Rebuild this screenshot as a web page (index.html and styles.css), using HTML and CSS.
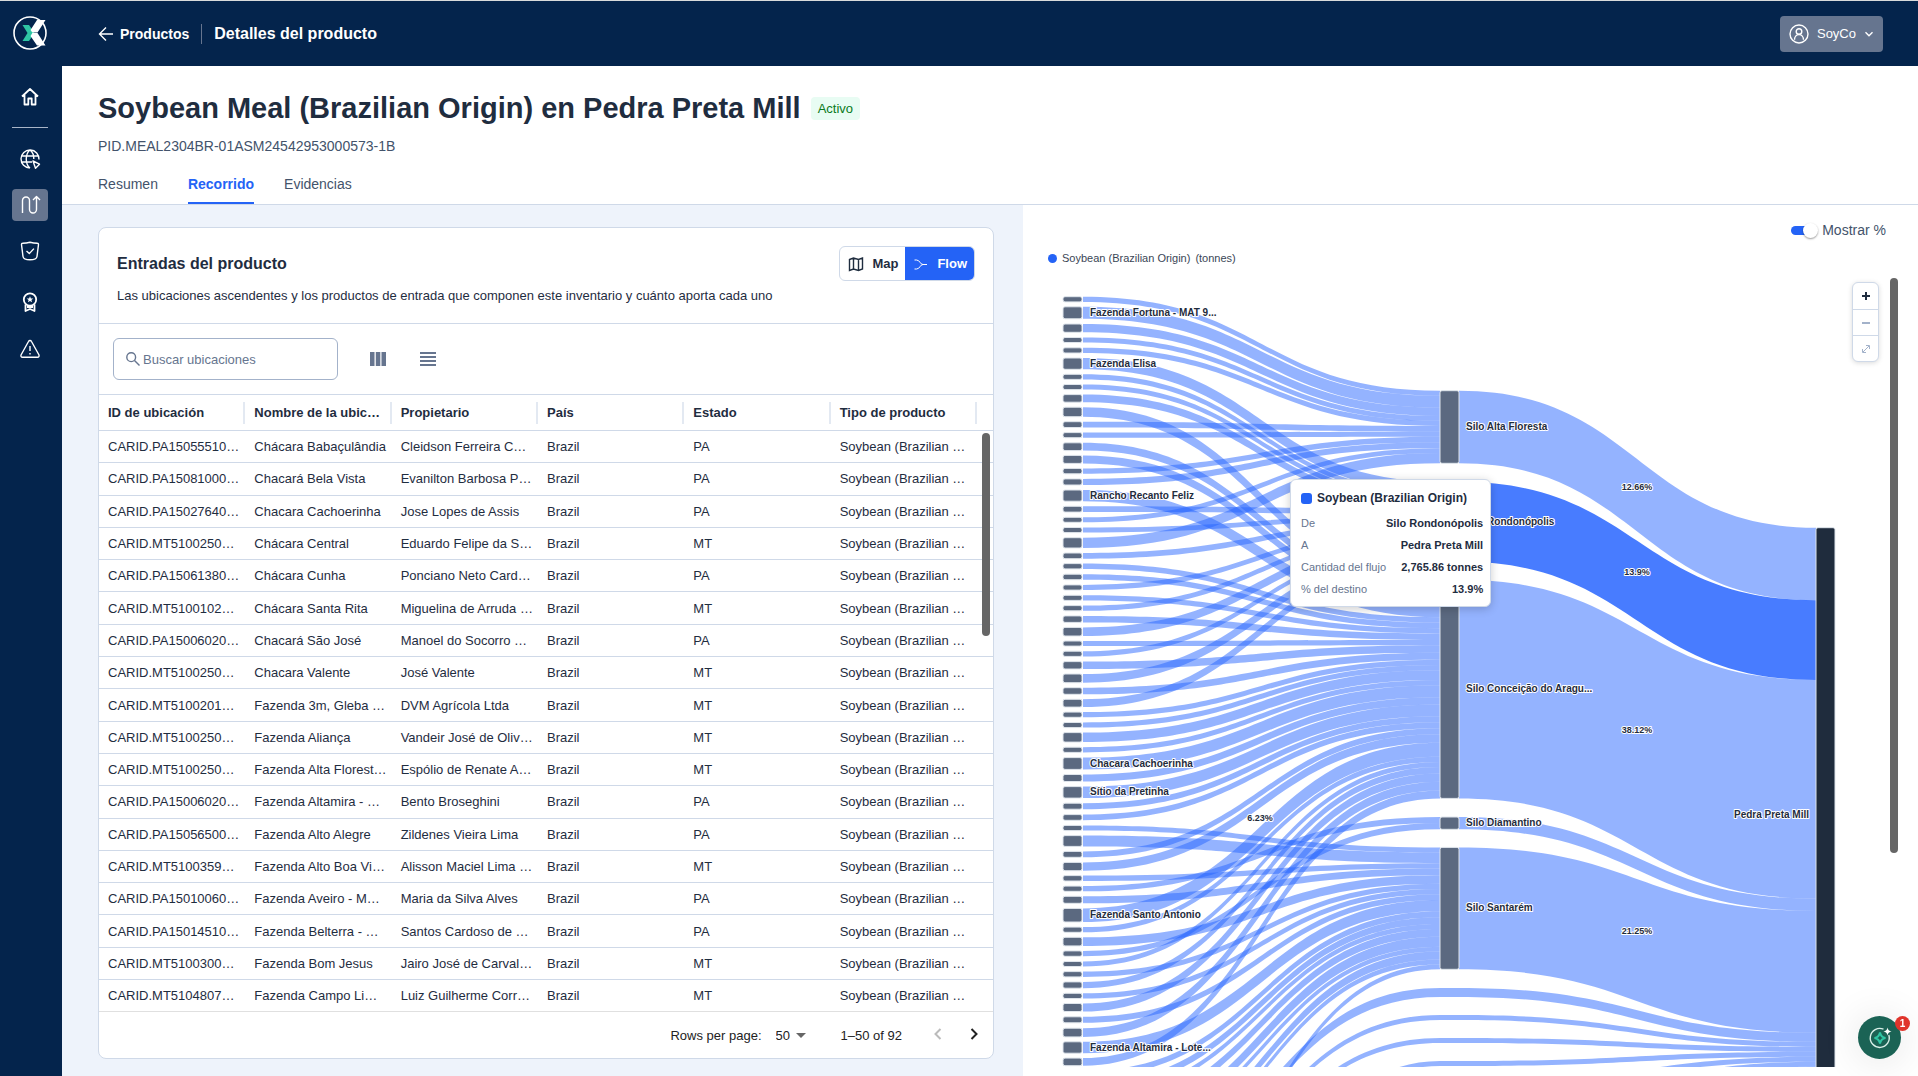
FILE: index.html
```html
<!DOCTYPE html>
<html lang="es">
<head>
  <meta charset="UTF-8">
  <meta name="viewport" content="width=device-width, initial-scale=1">
  <title>Detalles del producto</title>
  <link rel="stylesheet" href="styles.css">
</head>
<body>
  <nav class="sidebar">
    <a href="#" class="logo" aria-label="Inicio">
      <svg width="36" height="36" viewBox="0 0 36 36">
        <circle cx="18" cy="18" r="16" fill="none" stroke="#fff" stroke-width="1.6"/>
        <path d="M10.500 10h6.500l5.500 8-5.500 8h-6.500l5-8z" fill="#2fc6a4"/>
        <path d="M25 5h8.500l-8 12.500h-5.200L18.500 15z M18.500 21l1.800-3h5.200l8 12.500H25z" fill="#fff"/>
      </svg>
    </a>
    <a href="#" class="nav-item home" aria-label="Panel">
      <svg width="20" height="20" viewBox="0 0 20 20"><path d="M2 9.500 10 2l8 7.500M4.500 8v9.500h3.800v-6h3.400v6h3.800V8" /></svg>
    </a>
    <hr>
    <a href="#" class="nav-item globe" aria-label="Orígenes">
      <svg width="22" height="22" viewBox="0 0 22 22"><path d="M20 11.500A9 9 0 1 0 11 20M2.800 8h16.400M2.800 14H13M11 2C6 6 6 16 11 20M11 2c3 2.500 4 6 3.800 9"/><path d="M14 13l6.500 3.200-4 4z"/></svg>
    </a>
    <a href="#" class="nav-item active" aria-label="Productos">
      <svg width="22" height="22" viewBox="0 0 22 22"><path d="M3.500 19V6.500a3.500 3.500 0 0 1 7 0v9a3.500 3.500 0 0 0 7 0V3M14 6l3.500-3.500L21 6"/></svg>
    </a>
    <a href="#" class="nav-item shield" aria-label="Cumplimiento">
      <svg width="20" height="20" viewBox="0 0 20 20"><path d="M10 1.200Q13.500 2 17.500 2.200 18.500 2.200 18.500 3.500L17 15.500Q16.500 18.800 10 18.800T3 15.500L1.500 3.500Q1.500 2.200 2.500 2.200 6.500 2 10 1.200zM6.500 10l2.800 2.600 4.600-5"/></svg>
    </a>
    <a href="#" class="nav-item medal" aria-label="Certificados">
      <svg width="20" height="20" viewBox="0 0 20 20"><circle cx="10" cy="7.500" r="6.200"/><path d="M5.500 12.500v6.500l4.500-2 4.500 2v-6.500M7 15h6"/><path class="solid" d="M10 4.200l.9 2.200 2.400.1-1.900 1.500.7 2.300-2.100-1.300-2.100 1.300.7-2.300-1.900-1.500 2.400-.1z"/></svg>
    </a>
    <a href="#" class="nav-item alert" aria-label="Alertas">
      <svg width="22" height="22" viewBox="0 0 22 22"><path d="M11 2.500Q12 2.500 12.500 3.500L20 17Q20.500 19 18.500 19.200H3.500Q1.500 19 2 17L9.500 3.500Q10 2.500 11 2.500zM11 8v5M11 15v1.500"/></svg>
    </a>
  </nav>

  <div class="page">
    <header class="topbar">
      <a href="#" class="back">
        <svg width="16" height="16" viewBox="0 0 16 16"><path d="M15 8H1.500M8 1.500 1.500 8 8 14.500"/></svg>
        Productos
      </a>
      <span class="crumb">Detalles del producto</span>
      <button class="account">
        <svg width="20" height="20" viewBox="0 0 20 20"><circle cx="10" cy="10" r="9"/><circle cx="10" cy="7.500" r="2.800"/><path d="M5.500 15.800c0-7 9-7 9 0"/></svg>
        SoyCo
        <svg width="10" height="10" viewBox="0 0 10 10"><path d="M1.500 3.200 5 6.700l3.500-3.500"/></svg>
      </button>
    </header>

    <section class="product">
      <div class="product-title">
        <h1>Soybean Meal (Brazilian Origin) en Pedra Preta Mill</h1>
        <span class="badge">Activo</span>
      </div>
      <p class="pid">PID.MEAL2304BR-01ASM24542953000573-1B</p>
      <div class="tabs">
        <a href="#">Resumen</a>
        <a href="#" class="current">Recorrido</a>
        <a href="#">Evidencias</a>
      </div>
    </section>

    <main class="content">
      <section class="inputs">
        <div class="card">
          <div class="card-head">
            <div class="card-title">
              <h2>Entradas del producto</h2>
              <div class="view-switch">
                <button>
                  <svg width="16" height="16" viewBox="0 0 16 16"><path d="M1.500 3.500l4-1.500 5 1.500 4-1.500v11l-4 1.500-5-1.500-4 1.500zM5.500 2v11M10.500 3.500v11"/></svg>
                  Map
                </button>
                <button class="selected">
                  <svg width="16" height="16" viewBox="0 0 16 16"><path class="thin" d="M1.500 4h2C7 4 7 8.500 10 8.500h4M1.500 13h2C7 13 7 8.500 10 8.500"/></svg>
                  Flow
                </button>
              </div>
            </div>
            <p>Las ubicaciones ascendentes y los productos de entrada que componen este inventario y cuánto aporta cada uno</p>
          </div>

          <div class="toolbar">
            <label class="search">
              <svg width="16" height="16" viewBox="0 0 16 16"><circle cx="6.200" cy="6.200" r="4.400"/><path d="M9.500 9.500l5 5"/></svg>
              <input type="text" placeholder="Buscar ubicaciones" aria-label="Buscar ubicaciones">
            </label>
            <button class="tool" aria-label="Columnas">
              <svg width="16" height="14" viewBox="0 0 16 14"><path d="M0 0h4.500v14H0zM5.800 0h4.500v14H5.800zM11.500 0H16v14h-4.500z"/></svg>
            </button>
            <button class="tool" aria-label="Densidad">
              <svg width="16" height="14" viewBox="0 0 16 14"><path d="M0 0h16v2H0zM0 4h16v2H0zM0 8h16v2H0zM0 12h16v2H0z"/></svg>
            </button>
          </div>

          <div class="table-wrap">
            <table>
              <colgroup><col><col><col><col><col><col><col class="gutter"></colgroup>
              <thead>
                <tr>
                  <th>ID de ubicación</th>
                  <th>Nombre de la ubic…</th>
                  <th>Propietario</th>
                  <th>País</th>
                  <th>Estado</th>
                  <th>Tipo de producto</th>
                  <td></td>
                </tr>
              </thead>
              <tbody id="rows"></tbody>
            </table>
            <div class="scroll-thumb"></div>
          </div>

          <div class="pager">
            <label for="page-size">Rows per page:</label>
            <span class="page-size">
              <select id="page-size"><option>50</option><option>100</option></select>
              <svg width="10" height="5" viewBox="0 0 10 5"><path d="M0 0h10L5 5z" fill="#666"/></svg>
            </span>
            <span class="range">1–50 of 92</span>
            <button disabled aria-label="Anterior"><svg width="8" height="12" viewBox="0 0 8 12"><path d="M6.500 1 1.500 6l5 5"/></svg></button>
            <button aria-label="Siguiente"><svg width="8" height="12" viewBox="0 0 8 12"><path d="M1.500 1l5 5-5 5"/></svg></button>
          </div>
        </div>
      </section>

      <section class="flow">
        <div class="flow-options">
          <label class="switch"><input type="checkbox" checked><span class="track"></span>Mostrar %</label>
        </div>
        <div class="legend"><i></i><span>Soybean (Brazilian Origin)</span><span>(tonnes)</span></div>
        <svg id="sankey" viewBox="1023 280 895 787"></svg>

        <div class="zoom">
          <button aria-label="Acercar"><svg width="10" height="10" viewBox="0 0 10 10"><path d="M5 1v8M1 5h8"/></svg></button>
          <button disabled aria-label="Alejar"><svg width="10" height="10" viewBox="0 0 10 10"><path d="M1 5h8"/></svg></button>
          <button disabled aria-label="Restablecer"><svg width="10" height="10" viewBox="0 0 10 10"><path class="thin" d="M2 8l6-6M5 1.500h3.500V5M5 8.500H1.500V5"/></svg></button>
        </div>

        <div class="tooltip">
          <h3><i></i>Soybean (Brazilian Origin)</h3>
          <dl>
            <dt>De</dt><dd>Silo Rondonópolis</dd>
            <dt>A</dt><dd>Pedra Preta Mill</dd>
            <dt>Cantidad del flujo</dt><dd>2,765.86 tonnes</dd>
            <dt>% del destino</dt><dd>13.9%</dd>
          </dl>
        </div>
        <div class="flow-scroll"></div>
      </section>
    </main>
  </div>

  <button class="assistant" aria-label="Asistente">
    <svg width="24" height="24" viewBox="0 0 24 24">
      <path d="M15.500 3.200A9.500 9.500 0 1 0 20.800 9" fill="none" stroke="#d9efe8" stroke-width="1.400"/>
      <path d="M12 6.500Q12.800 11.200 17.500 12 12.800 12.800 12 17.500 11.200 12.800 6.500 12 11.200 11.200 12 6.500z" fill="none" stroke="#2fc6a4" stroke-width="2"/>
      <path d="M19.500 1.500Q20 5 23.500 5.500 20 6 19.500 9.500 19 6 15.500 5.500 19 5 19.500 1.500z" fill="#fff"/>
    </svg>
    <span class="count">1</span>
  </button>

  <script src="script.js"></script>
</body>
</html>
```

FILE: styles.css
```css
* { box-sizing: border-box; }
body {
  margin: 0;
  height: 100vh;
  display: flex;
  overflow: hidden;
  border-top: 1px solid #d9dbdb;
  font-family: 'Liberation Sans', Arial, sans-serif;
  font-size: 13px;
  color: #1f2d3f;
  background: #fff;
}
h1, h2, h3, p, dl, dd { margin: 0; }
a { color: inherit; text-decoration: none; }
button, input, select { font: inherit; color: inherit; }
button {
  border: none;
  background: none;
  padding: 0;
  cursor: pointer;
}
svg { flex-shrink: 0; }

/* sidebar */
.sidebar {
  width: 62px;
  padding-right: 2px;
  background: #04244c;
  display: flex;
  flex-direction: column;
  align-items: center;
}
.logo {
  height: 36px;
  margin: 14px 0 30px;
}
.nav-item {
  width: 36px;
  height: 32px;
  display: flex;
  align-items: center;
  justify-content: center;
  border-radius: 4px;
}
.nav-item svg, .topbar svg, .view-switch svg, .search svg, .pager button svg, .zoom svg {
  fill: none;
  stroke: currentColor;
  stroke-width: 1.4;
}
.nav-item svg {
  stroke: #fff;
  stroke-linejoin: round;
}
.nav-item.home svg, .nav-item.medal svg { stroke-width: 1.8; }
.nav-item .solid { fill: #fff; stroke: none; }
.nav-item.active {
  background: #66758f;
  margin: 14px 0;
}
.nav-item.medal { margin: 19px 0 15px; }
.sidebar hr {
  width: 36px;
  border: none;
  border-top: 1px solid #a9b5c8;
  margin: 14px 0 15px;
}

/* top bar */
.page {
  flex: 1;
  min-width: 0;
  display: flex;
  flex-direction: column;
}
.topbar {
  height: 65px;
  padding: 0 35px 0 36px;
  background: #04244c;
  color: #fff;
  font-weight: bold;
  display: flex;
  align-items: center;
}
.back {
  display: flex;
  align-items: center;
  gap: 6px;
  font-size: 14px;
}
.crumb {
  margin-left: 12px;
  padding-left: 12px;
  border-left: 1px solid #66758f;
  font-size: 16px;
  line-height: 20px;
}
.account {
  margin-left: auto;
  height: 36px;
  padding: 0 9px;
  border-radius: 4px;
  background: #66758f;
  display: flex;
  align-items: center;
  gap: 8px;
  font-weight: normal;
}

/* product header */
.product {
  padding: 22px 36px 0;
  border-bottom: 1px solid #cfd9e8;
}
.product-title {
  display: flex;
  align-items: center;
  gap: 10px;
}
h1 {
  font-size: 29px;
  line-height: 40px;
}
.badge {
  padding: 4px 7px;
  border-radius: 4px;
  background: #e8fcf3;
  color: #0a7a1c;
  line-height: 15px;
}
.pid {
  margin-top: 8px;
  font-size: 14px;
  line-height: 20px;
  color: #43536b;
}
.tabs {
  display: flex;
  gap: 30px;
  margin-top: 18px;
  font-size: 14px;
  color: #43536b;
}
.tabs a {
  line-height: 20px;
  padding-bottom: 8px;
  border-bottom: 2px solid transparent;
}
.tabs .current {
  color: #2463f6;
  font-weight: bold;
  border-color: #2463f6;
}

/* inputs card */
.content {
  flex: 1;
  min-height: 0;
  display: grid;
  grid-template-columns: 961fr 895fr;
}
.inputs {
  min-height: 0;
  padding: 22px 29px 17px 36px;
  background: #eef3fb;
}
.card {
  height: 100%;
  display: flex;
  flex-direction: column;
  border: 1px solid #cfd9e8;
  border-radius: 8px;
  background: #fff;
}
.card-head {
  padding: 18px 18px 19px;
  border-bottom: 1px solid #cfd9e8;
}
.card-title {
  display: flex;
  align-items: center;
  justify-content: space-between;
}
h2 { font-size: 16px; }
.card-head p {
  margin-top: 7px;
  line-height: 16px;
}
.view-switch {
  display: flex;
  border: 1px solid #cfd9e8;
  border-radius: 6px;
  overflow: hidden;
  font-weight: bold;
}
.view-switch button {
  height: 33px;
  padding: 0 7px 0 8px;
  display: flex;
  align-items: center;
  gap: 8px;
}
.view-switch .selected {
  background: #2463f6;
  color: #fff;
}
.view-switch .thin, .zoom .thin { stroke-width: 1; }
.toolbar {
  padding: 14px;
  display: flex;
  align-items: center;
  gap: 30px;
  color: #66758f;
}
.search {
  width: 225px;
  height: 42px;
  padding: 0 11px;
  border: 1px solid #a3b2ca;
  border-radius: 6px;
  display: flex;
  align-items: center;
}
.search input {
  width: 100%;
  border: none;
  outline: none;
}
.search input::placeholder { color: #66758f; }
.tool {
  width: 20px;
  height: 14px;
  fill: currentColor;
}

.table-wrap {
  flex: 1;
  min-height: 0;
  position: relative;
}
table {
  width: 100%;
  height: 100%;
  table-layout: fixed;
  border-collapse: collapse;
}
.gutter { width: 16px; }
th, td {
  padding: 0 9px;
  text-align: left;
  white-space: nowrap;
  border-top: 1px solid #cfd9e8;
}
th {
  height: 36px;
  background: linear-gradient(#e3e9f2, #e3e9f2) right center / 2px 22px no-repeat;
}
.scroll-thumb {
  position: absolute;
  top: 39px;
  right: 3px;
  width: 8px;
  height: 203px;
  border-radius: 4px;
  background: #666;
}
.pager {
  height: 47px;
  padding: 0 11px;
  border-top: 1px solid #e0e0e0;
  display: flex;
  align-items: center;
  justify-content: flex-end;
  color: #222;
}
.page-size {
  display: flex;
  align-items: center;
  margin: 0 35px 0 14px;
}
.page-size select {
  appearance: none;
  border: none;
  background: none;
  width: 20px;
  padding: 0;
}
.range { margin-right: 28px; }
.pager button {
  width: 16px;
  height: 16px;
  margin-left: 20px;
}
.pager .range + button { margin-left: 0; }
.pager button svg { stroke-width: 2; }
.pager button:disabled { color: #bbb; }

/* flow chart */
.flow {
  position: relative;
  min-width: 0;
  overflow: hidden;
}
.flow-options {
  display: flex;
  justify-content: flex-end;
  padding: 15px 32px 0 0;
  font-size: 14px;
  line-height: 20px;
  color: #43536b;
}
.switch {
  display: flex;
  align-items: center;
  gap: 11px;
}
.switch input {
  position: absolute;
  opacity: 0;
}
.track {
  position: relative;
  width: 20px;
  height: 9px;
  border-radius: 5px;
  background: #2463f6;
}
.track::after {
  content: '';
  position: absolute;
  top: -3px;
  left: 12px;
  width: 15px;
  height: 15px;
  border-radius: 50%;
  background: #fff;
  box-shadow: 0 1px 2px rgba(0, 0, 0, 0.4);
}
.legend {
  display: flex;
  align-items: center;
  gap: 5px;
  padding: 10px 0 0 25px;
  font-size: 11px;
  line-height: 16px;
  color: #3a4656;
}
.legend i {
  width: 9px;
  height: 9px;
  border-radius: 50%;
  background: #2463f6;
}
#sankey {
  display: block;
  width: 100%;
  margin-top: 14px;
  overflow: hidden;
}
.link { fill: #2563ff; fill-opacity: 0.49; }
.link.hover { fill-opacity: 0.84; }
.node { fill: #5b6980; stroke: #dfe5ec; }
.node.end { fill: #1f2c3d; }
#sankey text {
  font-size: 10px;
  font-weight: bold;
  fill: #1f2c3d;
  stroke: #fff;
  stroke-width: 2px;
  paint-order: stroke;
  stroke-linejoin: round;
}
#sankey text.percent { font-size: 9px; text-anchor: middle; }
#sankey text.last { text-anchor: end; }

.zoom {
  position: absolute;
  top: 77px;
  right: 39px;
  border: 1px solid #cfd9e8;
  border-radius: 6px;
  background: #fff;
  box-shadow: 0 1px 5px rgba(0, 0, 0, 0.15);
}
.zoom button {
  display: flex;
  align-items: center;
  justify-content: center;
  width: 25px;
  height: 26px;
}
.zoom button + button { border-top: 1px solid #cfd9e8; }
.zoom button:disabled { color: #a3b2ca; }
.zoom svg { stroke-width: 2; }
.flow-scroll {
  position: absolute;
  top: 73px;
  right: 20px;
  width: 8px;
  height: 575px;
  border-radius: 4px;
  background: #666;
}
.tooltip {
  position: absolute;
  left: 267px;
  top: 274px;
  width: 201px;
  padding: 10px;
  border: 1px solid #cfd9e8;
  border-radius: 6px;
  background: #fff;
  box-shadow: 0 2px 10px rgba(0, 0, 0, 0.2);
  font-size: 11px;
  white-space: nowrap;
}
.tooltip h3 {
  display: flex;
  align-items: center;
  gap: 5px;
  font-size: 12px;
  line-height: 16px;
}
.tooltip i {
  width: 11px;
  height: 11px;
  border-radius: 3px;
  background: #2463f6;
}
.tooltip dl {
  display: grid;
  grid-template-columns: auto auto;
  row-gap: 8px;
  margin-top: 10px;
  line-height: 14px;
}
.tooltip dt { color: #66758f; }
.tooltip dd {
  text-align: right;
  font-weight: bold;
}

/* assistant */
.assistant {
  position: fixed;
  right: 17px;
  bottom: 17px;
  width: 43px;
  height: 43px;
  border-radius: 50%;
  background: #1b6355;
  box-shadow: 0 2px 40px rgba(0, 0, 0, 0.12);
  display: flex;
  align-items: center;
  justify-content: center;
}
.count {
  position: absolute;
  top: 0;
  right: -9px;
  width: 15px;
  height: 15px;
  border-radius: 50%;
  background: #e0342b;
  color: #fff;
  font-size: 10px;
  font-weight: bold;
  line-height: 15px;
}
```

FILE: script.js
```js
const rows = [
  ['CARID.PA15055510…', 'Chácara Babaçulândia', 'Cleidson Ferreira C…', 'PA'],
  ['CARID.PA15081000…', 'Chacará Bela Vista', 'Evanilton Barbosa P…', 'PA'],
  ['CARID.PA15027640…', 'Chacara Cachoerinha', 'Jose Lopes de Assis', 'PA'],
  ['CARID.MT5100250…', 'Chácara Central', 'Eduardo Felipe da S…', 'MT'],
  ['CARID.PA15061380…', 'Chácara Cunha', 'Ponciano Neto Card…', 'PA'],
  ['CARID.MT5100102…', 'Chácara Santa Rita', 'Miguelina de Arruda …', 'MT'],
  ['CARID.PA15006020…', 'Chacará São José', 'Manoel do Socorro …', 'PA'],
  ['CARID.MT5100250…', 'Chacara Valente', 'José Valente', 'MT'],
  ['CARID.MT5100201…', 'Fazenda 3m, Gleba …', 'DVM Agrícola Ltda', 'MT'],
  ['CARID.MT5100250…', 'Fazenda Aliança', 'Vandeir José de Oliv…', 'MT'],
  ['CARID.MT5100250…', 'Fazenda Alta Florest…', 'Espólio de Renate A…', 'MT'],
  ['CARID.PA15006020…', 'Fazenda Altamira - …', 'Bento Broseghini', 'PA'],
  ['CARID.PA15056500…', 'Fazenda Alto Alegre', 'Zildenes Vieira Lima', 'PA'],
  ['CARID.MT5100359…', 'Fazenda Alto Boa Vi…', 'Alisson Maciel Lima …', 'MT'],
  ['CARID.PA15010060…', 'Fazenda Aveiro - M…', 'Maria da Silva Alves', 'PA'],
  ['CARID.PA15014510…', 'Fazenda Belterra - …', 'Santos Cardoso de …', 'PA'],
  ['CARID.MT5100300…', 'Fazenda Bom Jesus', 'Jairo José de Carval…', 'MT'],
  ['CARID.MT5104807…', 'Fazenda Campo Li…', 'Luiz Guilherme Corr…', 'MT']
];

document.getElementById('rows').innerHTML = rows.map(function (r) {
  return '<tr><td>' + [r[0], r[1], r[2], 'Brazil', r[3], 'Soybean (Brazilian …'].join('</td><td>') + '</td><td></td></tr>';
}).join('');

// silos: top, height
const silos = {
  A: { y: 390.7, h: 72.6, name: 'Silo Alta Floresta', pct: '12.66%' },
  R: { y: 481.8, h: 79.7, name: 'Silo Rondonópolis', pct: '13.9%', hover: true },
  C: { y: 579.8, h: 218.6, name: 'Silo Conceição do Aragu...', pct: '38.12%' },
  D: { y: 817, h: 12.3, name: 'Silo Diamantino' },
  S: { y: 847.4, h: 121.9, name: 'Silo Santarém', pct: '21.25%' }
};

// farms: top, height, target silo, label
const farms = [
  [296.7, 5.2, 'A'], [306.8, 12, 'A', 'Fazenda Fortuna - MAT 9...'], [324, 8.3, 'A'], [337.5, 5, 'A'],
  [347.8, 5.2, 'A'], [358, 11.3, 'R', 'Fazenda Elisa'], [374.3, 5.1, 'R'], [384.5, 5.1, 'R'],
  [394.6, 7.6, 'R'], [407.2, 9.5, 'C'], [421.7, 5.8, 'A'], [432.6, 5.1, 'A'], [442.8, 7.8, 'C'],
  [455.4, 8, 'C'], [468.4, 5.4, 'A'], [478.9, 6.1, 'A'], [490, 11.2, 'C', 'Rancho Recanto Feliz'],
  [506.3, 5.8, 'R'], [517.3, 5, 'A'], [527.5, 5.1, 'R'], [537.7, 10.3, 'A'], [553, 5.7, 'R'],
  [563.6, 5.3, 'C'], [574.2, 5.5, 'C'], [584.9, 5.2, 'R'], [595.3, 5.1, 'C'], [605.6, 5.2, 'R'],
  [615.9, 6.5, 'C'], [627.4, 8.6, 'R'], [641, 5.1, 'C'], [651.2, 5.2, 'R'], [661.6, 7.4, 'C'],
  [674, 8.7, 'R'], [687.7, 6.6, 'C'], [699.3, 7.8, 'R'], [712.1, 5.2, 'C'], [722.5, 5.1, 'C'],
  [732.6, 9.5, 'C'], [747.2, 5.2, 'C'], [757.6, 11.8, 'C', 'Chacara Cachoerinha'], [774.5, 7, 'C'],
  [786.6, 11.5, 'C', 'Sítio da Pretinha'], [803.2, 6, 'C'], [814.6, 5.7, 'C'], [825.4, 5.2, 'S'],
  [835.6, 10.8, 'S'], [851.4, 5.9, 'C'], [862.4, 8.3, 'C'], [875.6, 5.4, 'S'], [886.1, 5.2, 'D'],
  [896.3, 7, 'S'], [908.4, 13.6, 'C', 'Fazenda Santo Antonio'], [927.1, 5.2, 'C'], [937.3, 8.6, 'S'],
  [950.9, 5.4, 'D'], [961.5, 5, 'C'], [971.6, 5.3, 'S'], [981.9, 6.3, 'C'], [993.3, 5.2, 'S'],
  [1003.5, 8, 'C'], [1016.8, 6, 'S'], [1028.2, 8.7, 'C'], [1041.8, 11.4, 'S', 'Fazenda Altamira - Lote...'],
  [1058.1, 7.6, 'C'], [1071, 6, 'S'], [1083, 7, 'S'], [1095, 5, 'S'], [1110, 8, 'S'],
  [1128, 10, 'S'], [1145, 5, 'S'], [1165, 8, 'S'], [1180, 5, 'S'], [1258, 5, 'S']
];

// flows that go straight to the mill: source top, height, top at the silo column
const direct = [
  [1195, 9, 988], [1220, 5, 1015], [1240, 5, 1038], [1375, 5, 1061], [1400, 5, 1084],
  [1420, 5, 1108], [1440, 6, 1131], [1460, 10, 1154], [1480, 9, 1182], [1500, 8, 1210]
];

const FARM_X = 1063, SILO_X = 1440, MILL_X = 1816, NODE_W = 19;
let links = '', nodes = '', labels = '';

function link(x0, y0, h0, x1, y1, h1, cls) {
  const m = (x0 + x1) / 2;
  links += `<path class="link ${cls || ''}" d="M${x0} ${y0}C${m} ${y0} ${m} ${y1} ${x1} ${y1}v${h1}C${m} ${y1 + h1} ${m} ${y0 + h0} ${x0} ${y0 + h0}z"/>`;
}
function node(x, y, h, cls) {
  nodes += `<rect class="node ${cls || ''}" x="${x}" y="${y}" width="${NODE_W}" height="${h}" rx="2"/>`;
}
function label(x, y, text, cls) {
  labels += `<text class="${cls || ''}" x="${x}" y="${y}">${text}</text>`;
}

Object.keys(silos).forEach(function (key) {
  const silo = silos[key];
  const sources = farms.filter(f => f[2] === key);
  const scale = silo.h / sources.reduce((sum, f) => sum + f[1], 0);
  let y = silo.y;
  sources.forEach(function (f) {
    link(FARM_X + NODE_W + 1, f[0], f[1], SILO_X, y, f[1] * scale);
    y += f[1] * scale;
  });
});

farms.forEach(function (f) {
  node(FARM_X, f[0], f[1]);
  if (f[3]) label(1090, f[0] + f[1] / 2 + 3, f[3]);
});

let millY = 527.7;
Object.values(silos).forEach(function (s) {
  link(SILO_X + NODE_W, s.y, s.h, MILL_X, millY, s.h, s.hover && 'hover');
  node(SILO_X, s.y, s.h);
  label(1466, s.y + s.h / 2 + 3, s.name);
  if (s.pct) label(1637, (s.y + millY + s.h) / 2 - 6, s.pct, 'percent');
  millY += s.h;
});

direct.forEach(function (d) {
  link(FARM_X + NODE_W + 1, d[0], d[1], SILO_X, d[2], d[1]);
  links += `<rect class="link" x="${SILO_X}" y="${d[2]}" width="${NODE_W}" height="${d[1]}"/>`;
  link(SILO_X + NODE_W, d[2], d[1], MILL_X, millY, d[1]);
  millY += d[1];
});

node(MILL_X, 527.7, millY - 527.7, 'end');
label(1809, 818, 'Pedra Preta Mill', 'last');
label(1260, 821, '6.23%', 'percent');

document.getElementById('sankey').innerHTML = links + nodes + labels;
```
